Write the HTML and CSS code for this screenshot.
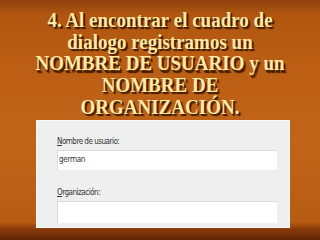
FILE: index.html
```html
<!DOCTYPE html>
<html>
<head>
<meta charset="utf-8">
<link rel="stylesheet" href="styles.css">
</head>
<body>
<div class="slide">
  <h1 class="title">4. Al encontrar el cuadro de<br>dialogo registramos un<br>NOMBRE DE USUARIO y un<br>NOMBRE DE<br>ORGANIZACIÓN.</h1>
  <div class="dialog">
    <div class="label"><u>N</u>ombre de usuario:</div>
    <div class="field">german</div>
    <div class="label label2"><u>O</u>rganización:</div>
    <div class="field"></div>
  </div>
</div>
</body>
</html>
```
FILE: styles.css
```css
html, body {
  margin: 0;
  padding: 0;
  width: 320px;
  height: 240px;
  overflow: hidden;
}
.slide {
  width: 320px;
  height: 240px;
  box-sizing: border-box;
  padding-top: 10px;
  display: flex;
  flex-direction: column;
  align-items: center;
  background: linear-gradient(180deg, #8e420c 0px, #b0560f 14px, #bb5e14 60px, #bf6418 140px, #b85c14 222px, #8a3a0a 229px, #5e2406 240px);
}
.title {
  margin: 0;
  font-family: "Liberation Serif", "Times New Roman", serif;
  font-weight: bold;
  font-size: 19px;
  line-height: 20px;
  text-align: center;
  color: #ffe9a6;
  text-shadow: 1px 1px 0 #4a2000, 2px 2px 1px #3a1800;
  transform: scaleY(1.08);
  transform-origin: top center;
}
.dialog {
  margin-top: 10px;
  margin-left: 6px;
  width: 254px;
  height: 108px;
  box-sizing: border-box;
  background: #efefef;
  border: 1px solid #fafafa;
  padding: 16px 0 0 20px;
  font-family: "Liberation Sans Narrow", "DejaVu Sans Condensed", "Liberation Sans", sans-serif;
  color: #333;
}
.label {
  font-size: 8px;
  line-height: 10px;
  letter-spacing: -0.5px;
  height: 12px;
}
.label2 {
  margin-top: 18px;
}
.field {
  margin-top: 1px;
  width: 220px;
  height: 20px;
  box-sizing: border-box;
  background: #fff;
  border-top: 1px solid #dadada;
  border-left: 1px solid #dadada;
  font-size: 8px;
  line-height: 18px;
  padding-left: 1px;
  letter-spacing: -0.3px;
}
.field + .label2 + .field {
  height: 22px;
}
```
